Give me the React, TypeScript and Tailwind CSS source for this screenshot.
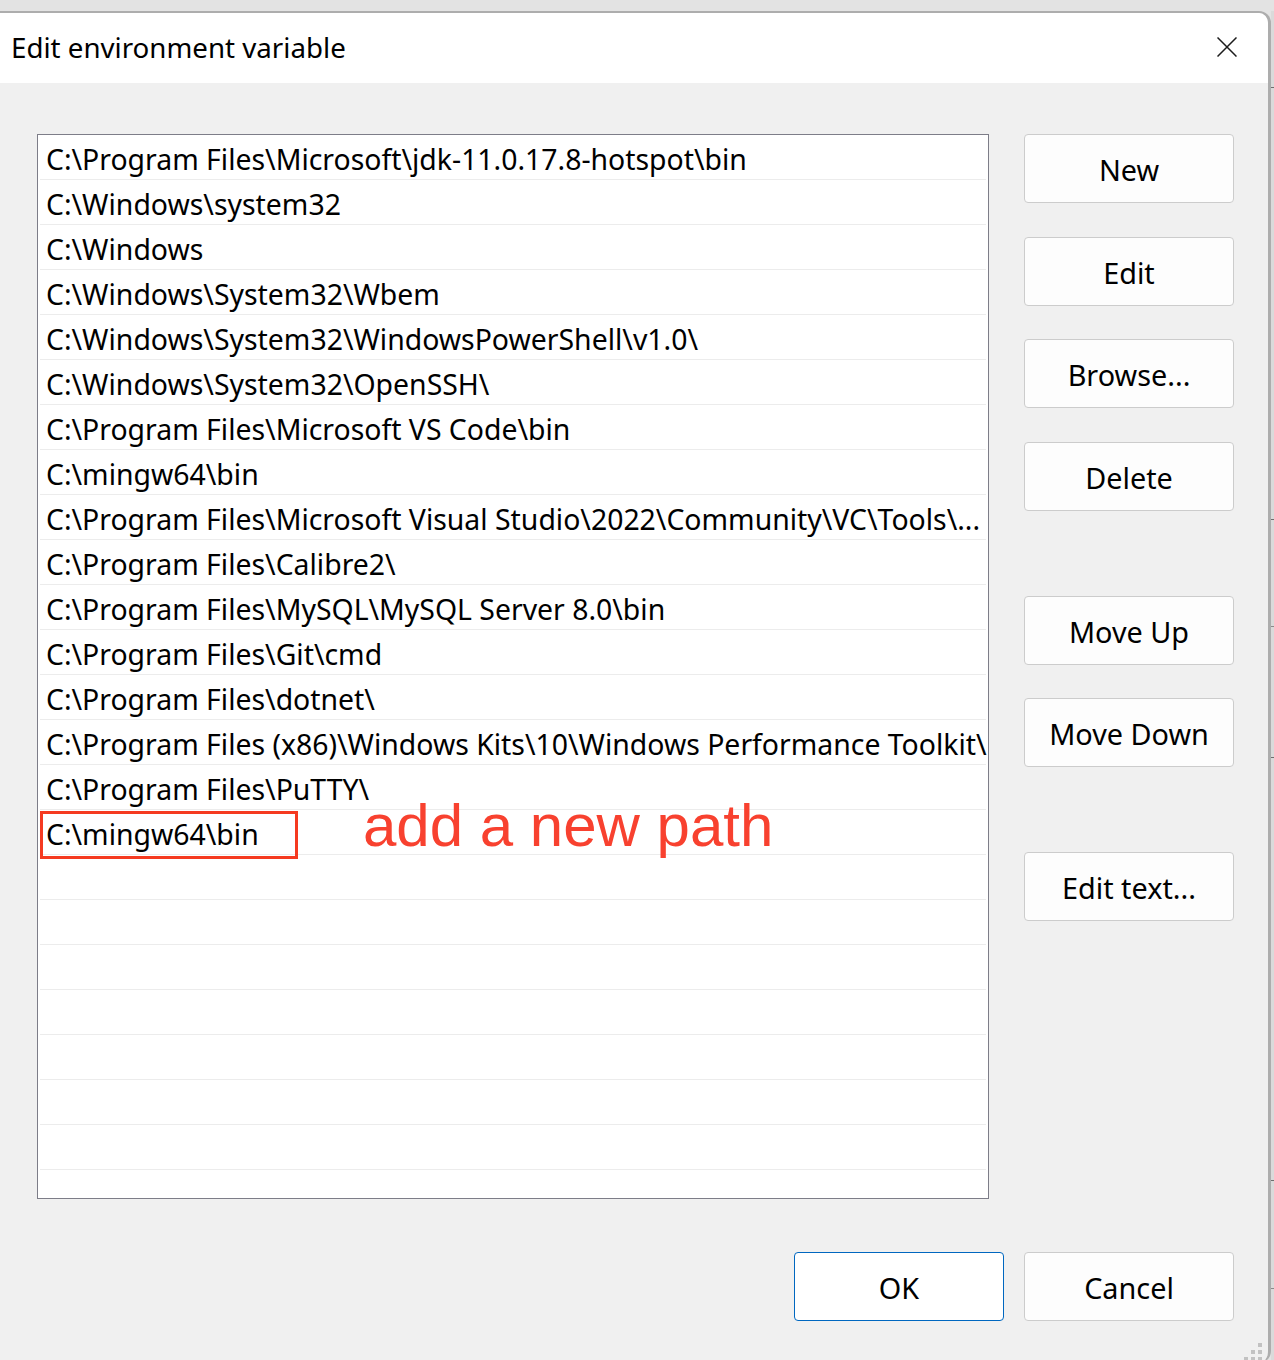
import React from "react";

const paths = [
  "C:\\Program Files\\Microsoft\\jdk-11.0.17.8-hotspot\\bin",
  "C:\\Windows\\system32",
  "C:\\Windows",
  "C:\\Windows\\System32\\Wbem",
  "C:\\Windows\\System32\\WindowsPowerShell\\v1.0\\",
  "C:\\Windows\\System32\\OpenSSH\\",
  "C:\\Program Files\\Microsoft VS Code\\bin",
  "C:\\mingw64\\bin",
  "C:\\Program Files\\Microsoft Visual Studio\\2022\\Community\\VC\\Tools\\...",
  "C:\\Program Files\\Calibre2\\",
  "C:\\Program Files\\MySQL\\MySQL Server 8.0\\bin",
  "C:\\Program Files\\Git\\cmd",
  "C:\\Program Files\\dotnet\\",
  "C:\\Program Files (x86)\\Windows Kits\\10\\Windows Performance Toolkit\\",
  "C:\\Program Files\\PuTTY\\",
  "C:\\mingw64\\bin",
];

const rows = [...paths, ...Array(8).fill("")];

function Button({ label, primary, className = "" }: { label: string; primary?: boolean; className?: string }) {
  return (
    <button
      type="button"
      className={`flex h-[69px] w-[210px] items-center justify-center rounded-[4px] border pt-[2px] text-[28.8px] text-black ${
        primary ? "border-[#0067c0] bg-white" : "border-[#cccccc] bg-[#fdfdfd]"
      } ${className}`}
    >
      {label}
    </button>
  );
}

export default function App() {
  const font = { fontFamily: '"Noto Sans", "Open Sans", sans-serif' };

  return (
    <div className="relative flex h-[1360px] w-[1274px] overflow-hidden bg-[#e3e3e3]" style={font}>
      {/* dialog */}
      <div className="relative -ml-[4px] mt-[11px] flex h-[1352px] w-[1275px] flex-col overflow-hidden rounded-tr-[12px] rounded-br-[12px] border-t-2 border-r-[3px] border-[#adadad]">
        <div className="flex h-[70px] shrink-0 items-center justify-between bg-white pl-[15px] pr-[31px]">
          <span className="text-[27.7px] text-black">Edit environment variable</span>
          <svg width="20" height="20" viewBox="0 0 20 20" className="mt-[-2px]">
            <path d="M0.5 0.5 L19.5 19.5 M19.5 0.5 L0.5 19.5" stroke="#1c1c1c" strokeWidth="1.5" fill="none" />
          </svg>
        </div>

        <div className="flex flex-1 bg-[#f0f0f0] pl-[41px] pt-[51px]">
          <div className="relative h-[1065px] w-[952px] overflow-hidden border border-[#7d7d88] bg-white">
            {rows.map((p, i) => (
              <div
                key={i}
                className="mx-[2px] box-border flex h-[45px] items-center border-b border-[#ececec] pl-[6px] pt-[4px] text-[28.4px] whitespace-nowrap text-black"
              >
                {p}
              </div>
            ))}
            <div className="absolute left-[2px] top-[676px] h-[48px] w-[258px] border-[3px] border-[#f53a20]" />
            <span
              className="absolute left-[325px] top-[661px] text-[60px] leading-none text-[#f8412f]"
              style={{ fontFamily: '"Liberation Sans", Arial, sans-serif' }}
            >
              add a new path
            </span>
          </div>

          <div className="ml-[35px] flex flex-col">
            <Button label="New" />
            <Button label="Edit" className="mt-[34px]" />
            <Button label="Browse..." className="mt-[33px]" />
            <Button label="Delete" className="mt-[34px]" />
            <Button label="Move Up" className="mt-[85px]" />
            <Button label="Move Down" className="mt-[33px]" />
            <Button label="Edit text..." className="mt-[85px]" />
          </div>
        </div>

        <div className="absolute bottom-[42px] right-[34px] flex gap-[20px]">
          <Button label="OK" primary />
          <Button label="Cancel" />
        </div>

        {/* resize grip */}
        <div className="absolute bottom-[2px] right-[6px] grid grid-cols-3 gap-[3px]">
          {[0, 0, 1, 0, 1, 1, 1, 1, 1].map((on, i) => (
            <span key={i} className={`h-[4px] w-[4px] ${on ? "bg-[#c2c2c2]" : ""}`} />
          ))}
        </div>
      </div>

      {/* background window peeking on the right */}
      <div className="relative w-[3px] bg-[#dadada]">
        <div className="absolute left-0 top-0 h-[11px] w-full bg-[#e3e3e3]" />
        <div className="absolute left-0 top-[87px] h-[1px] w-full bg-[#6e6e6e]" />
        <div className="absolute left-0 top-[519px] h-[1px] w-full bg-[#6e6e6e]" />
        <div className="absolute left-0 top-[626px] h-[1px] w-full bg-[#8a8a8a]" />
        <div className="absolute left-0 top-[757px] h-[1px] w-full bg-[#6e6e6e]" />
        <div className="absolute left-0 top-[1180px] h-[1px] w-full bg-[#6e6e6e]" />
        <div className="absolute left-0 top-[1288px] h-[1px] w-full bg-[#8a8a8a]" />
      </div>
    </div>
  );
}
